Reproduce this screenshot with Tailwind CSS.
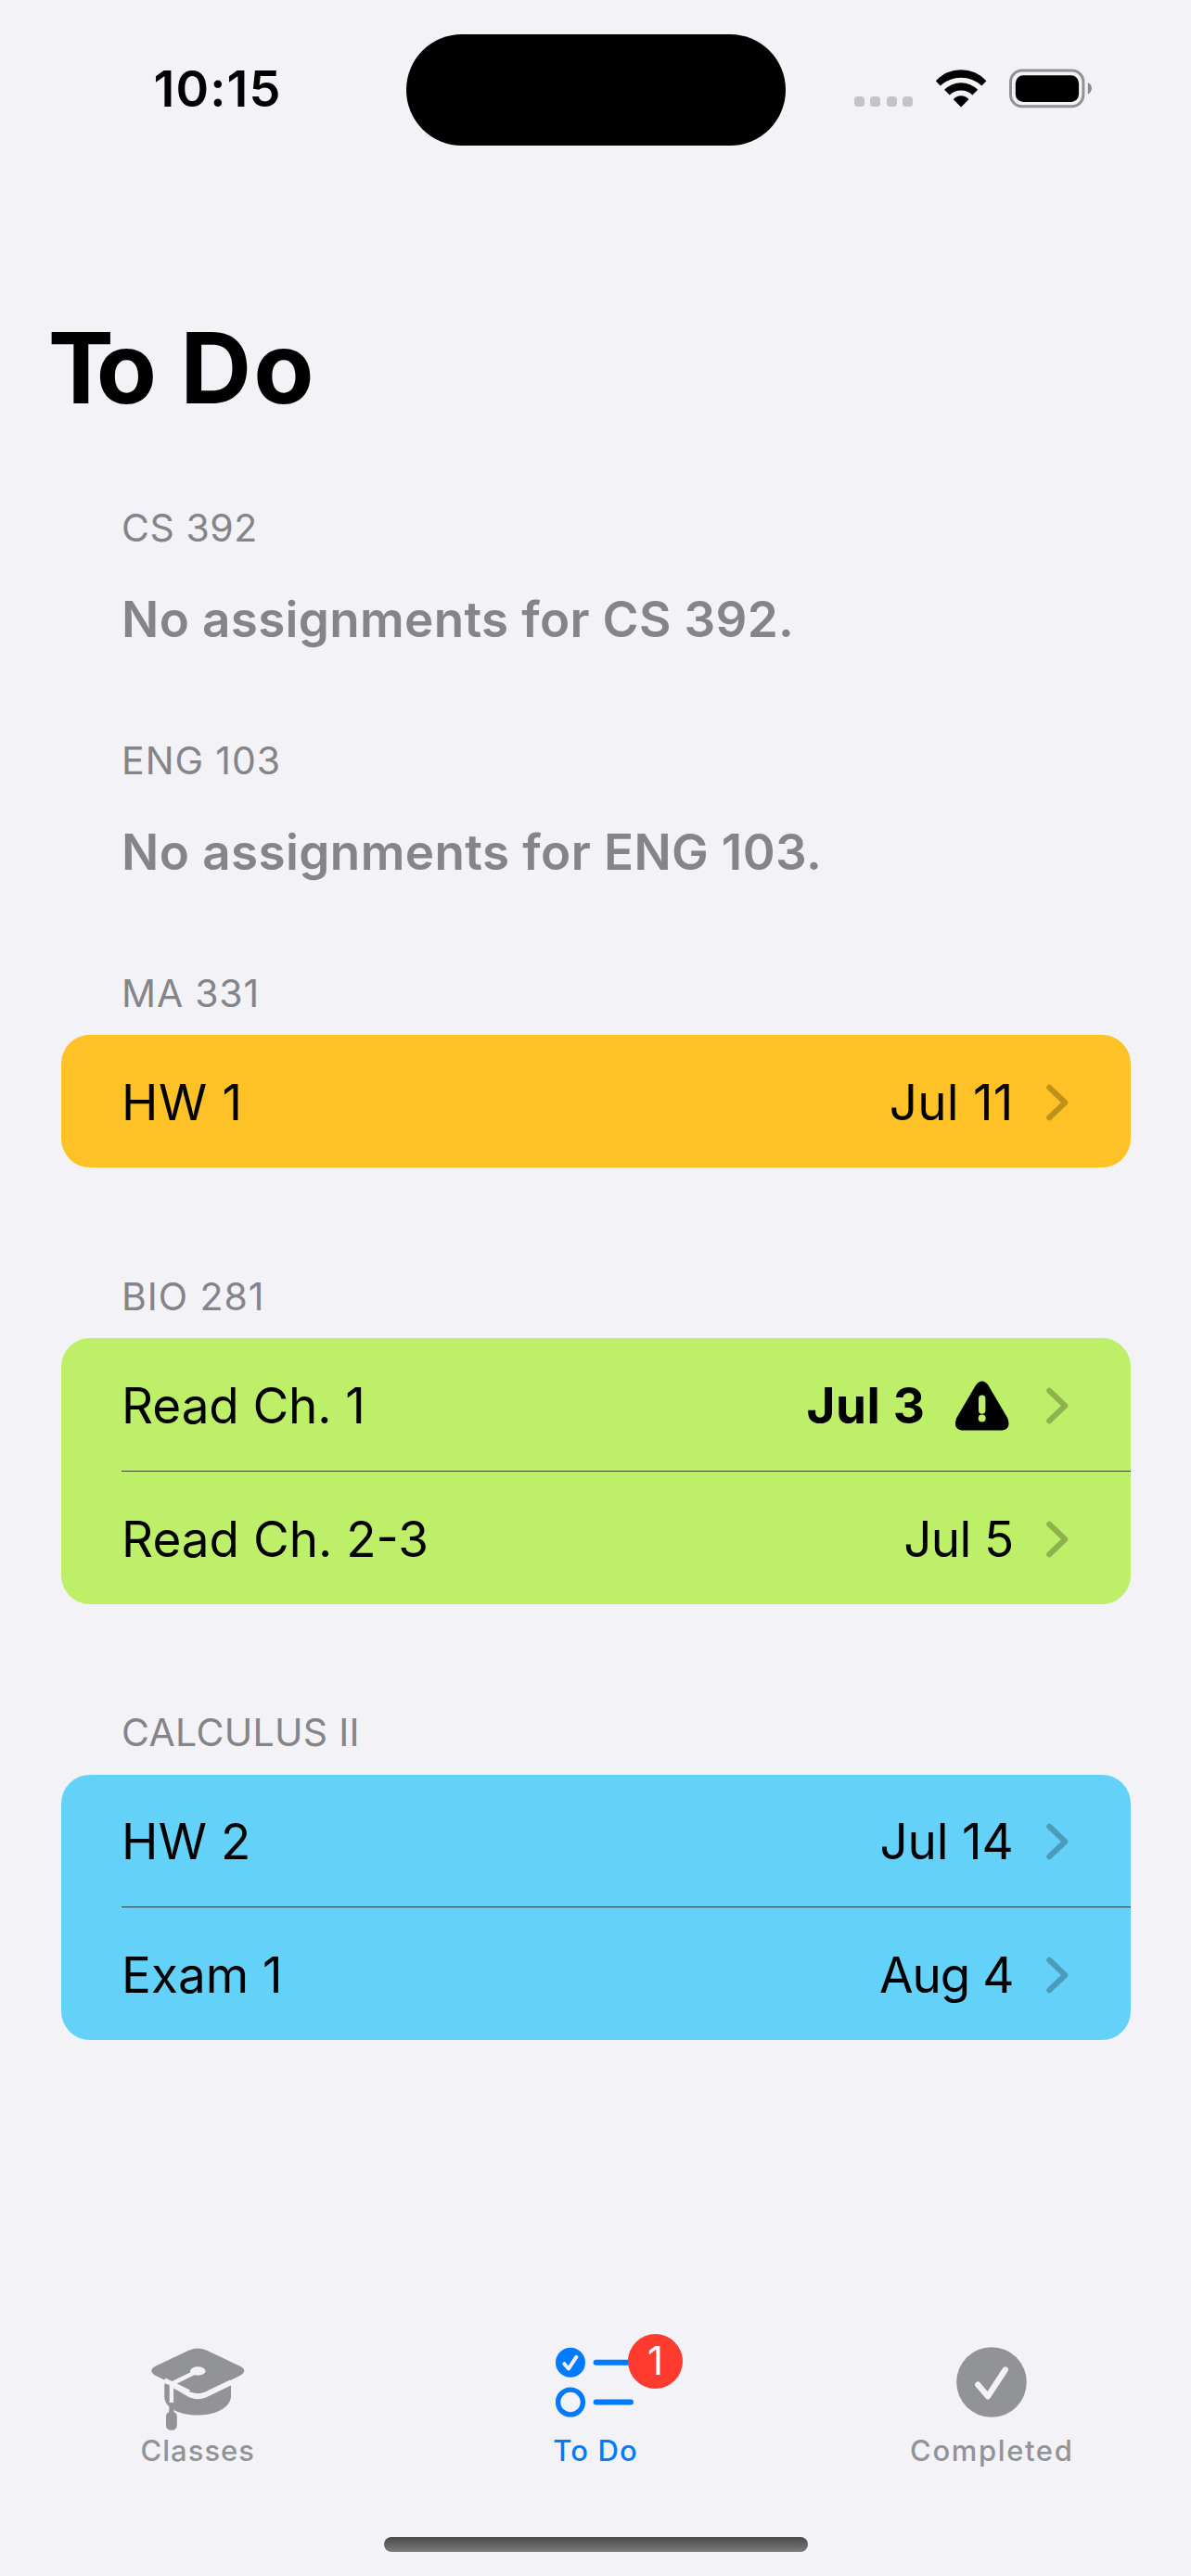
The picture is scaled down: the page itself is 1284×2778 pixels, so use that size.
<!DOCTYPE html>
<html lang="en">
<head>
<meta charset="utf-8">
<title>To Do</title>
<script src="https://cdn.jsdelivr.net/npm/@tailwindcss/browser@4"></script>
</head>
<body class="bg-[#f2f2f7]">
<div class="flex h-[2778px] w-[1284px] flex-col overflow-hidden bg-[#f2f2f7] font-[Inter,sans-serif] text-black">

  <!-- Status bar -->
  <header class="flex h-[157px] shrink-0 items-start pt-[36.5px]">
    <div class="w-[437.5px] pt-[29px] pl-[165.5px] text-[54px] leading-[60px] font-semibold tracking-[1.1px]">10:15</div>
    <div class="h-[120px] w-[409px] rounded-[60px] bg-black"></div>
    <div class="flex pl-[74.5px] pt-[37px]">
      <div class="flex gap-[6.4px] pt-[30.5px]">
        <span class="h-[11px] w-[11px] rounded-[3.5px] bg-[#c4c3c9]"></span>
        <span class="h-[11px] w-[11px] rounded-[3.5px] bg-[#c4c3c9]"></span>
        <span class="h-[11px] w-[11px] rounded-[3.5px] bg-[#c4c3c9]"></span>
        <span class="h-[11px] w-[11px] rounded-[3.5px] bg-[#c4c3c9]"></span>
      </div>
      <svg class="ml-[24px] h-[42px] w-[56px]" viewBox="0 0 56 42">
        <path d="M0.8 13.2 A37 37 0 0 1 55.4 13.2 L50.4 18.5 A32.6 32.6 0 0 0 5.8 18.5 Z"/>
        <path d="M10.1 22.8 A25.1 25.1 0 0 1 46.1 22.8 L40.4 28.5 A17.9 17.9 0 0 0 15.8 28.5 Z"/>
        <path d="M19.8 33.2 A10.6 10.6 0 0 1 36.4 33.2 L28.1 41.5 Z"/>
      </svg>
      <svg class="ml-[24px] h-[43px] w-[90px]" viewBox="0 0 90 43">
        <rect x="1.5" y="2" width="78.4" height="38.8" rx="12.5" fill="none" stroke="#929196" stroke-width="3"/>
        <rect x="6.8" y="7.2" width="68.3" height="28.7" rx="8.5"/>
        <path d="M84.8 15 Q88.9 17 88.9 21.3 Q88.9 25.6 84.8 27.6 Z" fill="#8c8b90"/>
      </svg>
    </div>
  </header>

  <h1 class="mt-[180px] h-[120px] shrink-0 pl-[51.7px] text-[106.5px] leading-[120px] font-bold tracking-[0px]"><span class="tracking-[-19px]">T</span>o <span class="tracking-[2px]">D</span>o</h1>

  <main class="flex flex-col px-[65.5px] pt-[82px] text-[53px] leading-[60px]">
    <section class="mb-[68px] pl-[65.6px] text-[#858489]">
      <h2 class="h-[60px] text-[41px] tracking-[0.5px]">CS 392</h2>
      <p class="mt-[15px] flex h-[108px] items-center font-semibold tracking-[0.33px]">No assignments for CS 392.</p>
    </section>
    <section class="mb-[68px] pl-[65.6px] text-[#858489]">
      <h2 class="h-[60px] text-[41px] tracking-[0.9px]">ENG 103</h2>
      <p class="mt-[15px] flex h-[108px] items-center font-semibold tracking-[0.4px]">No assignments for ENG 103.</p>
    </section>

    <section class="mb-[109px]">
      <h2 class="h-[60px] pl-[65.6px] text-[41px] tracking-[0.76px] text-[#858489]">MA 331</h2>
      <div class="mt-[15px] overflow-hidden rounded-[31px] bg-[#ffc226]">
        <div class="flex h-[143px] items-center pt-[2px] pr-[67px] pl-[65.6px]">
          <span class="grow tracking-[0.6px]">HW 1</span>
          <span class="tracking-[0.22px]">Jul 11</span>
          <svg class="ml-[35px] h-[40px] w-[24px] opacity-25" viewBox="0 0 24 40"><path d="M3.2 3.8 L20.3 20 L3.2 36.2" fill="none" stroke="#000" stroke-width="6" stroke-linecap="round" stroke-linejoin="round"/></svg>
        </div>
      </div>
    </section>

    <section class="mb-[108px]">
      <h2 class="h-[60px] pl-[65.6px] text-[41px] tracking-[0.94px] text-[#858489]">BIO 281</h2>
      <div class="mt-[15px] overflow-hidden rounded-[31px] bg-[#beef69]">
        <div class="flex h-[143px] items-center pt-[2px] pr-[67px] pl-[65.6px]">
          <span class="grow tracking-[-0.1px]">Read Ch. 1</span>
          <span class="font-bold tracking-[0.6px]">Jul 3</span>
          <svg class="ml-[31px] h-[54px] w-[60px]" viewBox="0 0 60 54">
            <path d="M23.2 4.6 Q29.7 -3.4 36.2 4.6 L57.2 40.2 Q61.5 52.6 51.5 53.4 L8 53.4 Q-2 52.6 2.2 40.2 Z"/>
            <path d="M29.7 19.2 L29.7 32" stroke="#beef69" stroke-width="7.4" stroke-linecap="round"/>
            <circle cx="29.7" cy="40.4" r="4" fill="#beef69"/>
          </svg>
          <svg class="ml-[39px] h-[40px] w-[24px] opacity-25" viewBox="0 0 24 40"><path d="M3.2 3.8 L20.3 20 L3.2 36.2" fill="none" stroke="#000" stroke-width="6" stroke-linecap="round" stroke-linejoin="round"/></svg>
        </div>
        <div class="ml-[65px] h-px bg-black/70"></div>
        <div class="flex h-[143px] items-center pt-[2px] pr-[67px] pl-[65.6px]">
          <span class="grow">Read Ch. 2-3</span>
          <span class="tracking-[-0.66px]">Jul 5</span>
          <svg class="ml-[35px] h-[40px] w-[24px] opacity-25" viewBox="0 0 24 40"><path d="M3.2 3.8 L20.3 20 L3.2 36.2" fill="none" stroke="#000" stroke-width="6" stroke-linecap="round" stroke-linejoin="round"/></svg>
        </div>
      </div>
    </section>

    <section>
      <h2 class="h-[60px] pl-[65.6px] text-[41px] tracking-[0.29px] text-[#858489]">CALCULUS II</h2>
      <div class="mt-[16px] overflow-hidden rounded-[31px] bg-[#64d2f8]">
        <div class="flex h-[142px] items-center pt-[2px] pr-[67px] pl-[65.6px]">
          <span class="grow tracking-[0.16px]">HW 2</span>
          <span class="tracking-[-0.18px]">Jul 14</span>
          <svg class="ml-[35px] h-[40px] w-[24px] opacity-25" viewBox="0 0 24 40"><path d="M3.2 3.8 L20.3 20 L3.2 36.2" fill="none" stroke="#000" stroke-width="6" stroke-linecap="round" stroke-linejoin="round"/></svg>
        </div>
        <div class="ml-[65px] h-px bg-black/70"></div>
        <div class="flex h-[143px] items-center pt-[2px] pr-[67px] pl-[65.6px]">
          <span class="grow">Exam 1</span>
          <span class="tracking-[-1px]">Aug 4</span>
          <svg class="ml-[35px] h-[40px] w-[24px] opacity-25" viewBox="0 0 24 40"><path d="M3.2 3.8 L20.3 20 L3.2 36.2" fill="none" stroke="#000" stroke-width="6" stroke-linecap="round" stroke-linejoin="round"/></svg>
        </div>
      </div>
    </section>
  </main>

  <!-- Tab bar -->
  <nav class="mt-auto grid h-[278px] shrink-0 grid-cols-3 pt-[30.5px] text-[31px] leading-[36px] font-medium text-[#929397]">
    <a class="flex flex-col items-center pr-[1.5px]">
      <div class="h-[94px]">
        <svg class="h-[92px] w-[102px]" viewBox="0 0 102 92">
          <path d="M15.5 39 V54 C15.5 66 32 73.5 51.3 73.5 C71 73.5 87 65 87 53 V41.5 L60 54.5 Q51.3 58 42.5 54.5 Z" fill="#929397"/>
          <path d="M42 3.4 Q51.3 -0.6 60.5 3.4 L96.5 20.6 Q106 25.6 96.5 31 L60.5 48.4 Q51.3 52 42 48.4 L6 31 Q-3.4 25.6 6 20.6 Z" fill="#929397"/>
          <path d="M49 27 L22.8 40 V70" fill="none" stroke="#f2f2f7" stroke-width="4.6"/>
          <ellipse cx="51.3" cy="26" rx="8.3" ry="4.7" fill="#f2f2f7"/>
          <path d="M20.3 60 H25.4 V70 Q28.8 71.5 28.8 75 V84 Q28.8 89.8 22.9 89.8 Q17 89.8 17 84 V75 Q17 71.5 20.3 70 Z" fill="#929397"/>
          <path d="M15.5 40.5 H20.5 V64 Q15.5 60 15.5 54 Z" fill="#929397"/>
          <path d="M42 48.4 L15.5 35.6 M42.5 50.5 Q51.3 54.4 60 50.5 L87 37.4" fill="none" stroke="#f2f2f7" stroke-width="4.4"/>
        </svg>
      </div>
      <span class="tracking-[1.04px]">Classes</span>
    </a>
    <a class="relative flex flex-col items-center text-[#007bff]">
      <div class="h-[94px]">
        <svg class="h-[76px] w-[86px]" viewBox="0 0 86 76">
          <circle cx="16" cy="16.7" r="16" fill="#007bff"/>
          <path d="M9.4 18.2 L14 23.5 L22.3 10.8" fill="none" stroke="#f2f2f7" stroke-width="4" stroke-linecap="round" stroke-linejoin="round"/>
          <circle cx="16" cy="59.5" r="13.4" fill="none" stroke="#007bff" stroke-width="5.4"/>
          <path d="M43.6 16.7 H81 M43.6 59.6 H81" stroke="#007bff" stroke-width="6" stroke-linecap="round"/>
        </svg>
      </div>
      <span class="tracking-[1.13px]">To Do</span>
      <span class="absolute top-[-13.5px] left-[249.3px] flex h-[58.6px] w-[58.6px] items-center justify-center rounded-full bg-[#ff3b30] text-[42px] font-normal text-white">1</span>
    </a>
    <a class="flex flex-col items-center pr-[1.5px]">
      <div class="h-[94px]">
        <svg class="h-[76px] w-[77px]" viewBox="0 0 77 76">
          <circle cx="38" cy="38" r="37.8" fill="#929397"/>
          <path d="M23.3 40.7 L34 53.3 L52.8 24.5" fill="none" stroke="#f2f2f7" stroke-width="6.4" stroke-linecap="round" stroke-linejoin="round"/>
        </svg>
      </div>
      <span class="tracking-[1.63px]">Completed</span>
    </a>
  </nav>
  <div class="absolute top-[2735.5px] left-[414px] h-[16px] w-[457px] rounded-full bg-linear-to-b from-[#4a4a4a] to-[#7c7c7d]"></div>
</div>
</body>
</html>
